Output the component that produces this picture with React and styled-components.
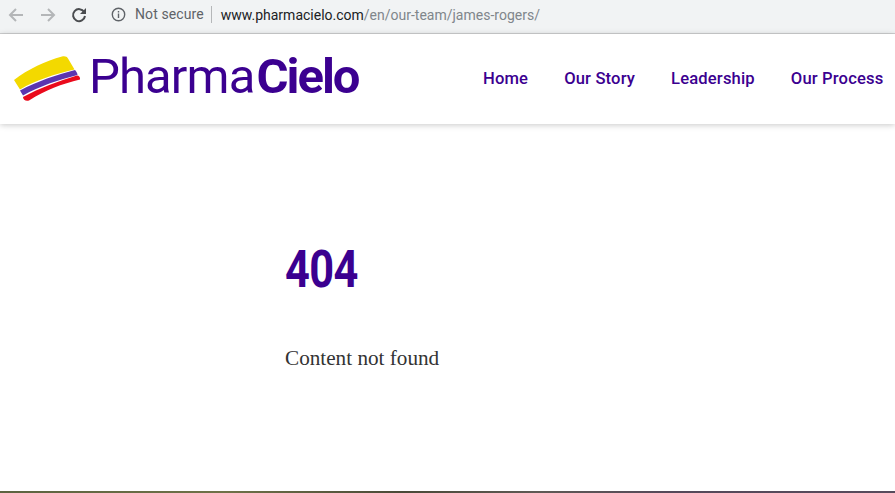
import React from "react";
import styled, { createGlobalStyle } from "styled-components";

const Global = createGlobalStyle`
  html, body { margin: 0; padding: 0; background: #fff; overflow: hidden; }
  #root { width: 895px; height: 493px; }
`;
const Page = styled.div`
  width: 895px; height: 493px; display: flex; flex-direction: column; overflow: hidden;
`;
const Chrome = styled.div`
  height: 33px; flex: none; background: #f1f3f4; border-bottom: 1px solid #cfd0d1; box-sizing: content-box;
  display: flex; align-items: center; padding-left: 6px; padding-bottom: 0;
  font-family: "Roboto", "Liberation Sans", sans-serif; font-size: 14px;
`;
const NavBtn = styled.button`
  width: 20px; height: 20px; padding: 0; border: 0; background: none; margin: -4px ${p => p.$gap}px 0 0;
  display: flex; align-items: center; justify-content: center; color: ${p => p.$color};
`;
const Omnibox = styled.div`
  display: flex; align-items: center; flex: 1; height: 28px; background: #f1f3f4; margin: -4px 0 0 22px;
`;
const InfoIcon = styled.span`
  display: flex; margin-right: 9px; color: #5f6368;
`;
const Secure = styled.span`
  color: #5f6368; padding-right: 7px; border-right: 1px solid #b5b7b9; line-height: 17px; letter-spacing: 0.1px;
`;
const Url = styled.span`
  margin-left: 9px; color: #80868b; letter-spacing: 0;
  b { font-weight: 400; color: #202124; }
`;
const Header = styled.header`
  height: 90px; flex: none; background: #fff; display: flex; align-items: center; position: relative;
  box-shadow: 0 1px 6px rgba(0,0,0,.22); z-index: 1; padding-left: 13px; white-space: nowrap;
`;
const Brand = styled.div`
  display: flex; align-items: center; width: 470px; flex: none; gap: 5px;
`;
const Wordmark = styled.div`
  font-family: "Roboto", sans-serif; font-size: 49px; letter-spacing: -0.9px; color: #3b0090; font-weight: 400;
  line-height: 90px; margin-top: -5px;
  b { font-weight: 700; letter-spacing: -2px; margin-left: 2px; }
`;
const Nav = styled.nav`
  display: flex; gap: 36px; margin-top: -1px;
`;
const NavLink = styled.a`
  font-family: "Roboto", sans-serif; font-weight: 500; font-size: 16.6px; color: #3b0090; letter-spacing: 0.15px;
`;
const Main = styled.main`
  flex: 1; padding: 116px 0 0 285px; background: #fff;
`;
const Title = styled.h1`
  margin: 0; font-family: "Roboto", sans-serif; font-weight: 700; font-size: 51px; line-height: 60px; color: #3b0090;
  transform: scaleX(.85); transform-origin: left center; letter-spacing: -0.8px;
`;
const Message = styled.p`
  margin: 43px 0 0; font-family: "Liberation Serif", serif; font-size: 21.2px; line-height: 30px; color: #333;
`;
const FooterEdge = styled.div`
  height: 2px; flex: none;
  background: linear-gradient(90deg, #5c6340 0%, #6f7248 25%, #4a4a38 45%, #5f5a55 60%, #55495a 75%, #574b5c 100%);
`;

const Back = () => (
  <svg width="16" height="16" viewBox="0 0 16 16" fill="none" stroke="currentColor" strokeWidth="2">
    <path d="M15 8H2M8 2 2 8l6 6" />
  </svg>
);
const Forward = () => (
  <svg width="16" height="16" viewBox="0 0 16 16" fill="none" stroke="currentColor" strokeWidth="2">
    <path d="M1 8h13M8 2l6 6-6 6" />
  </svg>
);
const Reload = () => (
  <svg width="16" height="16" viewBox="0 0 16 16" fill="none">
    <path d="M13.2 5A6 6 0 1 0 14 9" stroke="currentColor" strokeWidth="2" />
    <path d="M15 1v6H9z" fill="currentColor" />
  </svg>
);
const Info = () => (
  <svg width="15" height="15" viewBox="0 0 15 15" fill="none">
    <circle cx="7.5" cy="7.5" r="6.2" stroke="currentColor" strokeWidth="1.4" />
    <path d="M6.8 6.6h1.4v4.4H6.8zM6.8 3.9h1.4v1.5H6.8z" fill="currentColor" />
  </svg>
);
const Logo = () => (
  <svg width="71" height="48" viewBox="13 56 71 48">
    <path d="M14 81C28 70 46 62 62 57.500c3-.5 5 0 6 2l6.500 11C55 75 36 81 20 90.500z" fill="#f3d900" />
    <path d="M20 91.500C38 82 56 76 75 71c1 1 2.500 3 2.500 5C58 81 40 87 23 96.500z" fill="#5b35b0" />
    <path d="M23 98C40 89 58 82 77 76.500c2 0 3.500 2 3 4C62 85 45 91 29 101.500c-3 1-6-.5-6-3.500z" fill="#ea0a1c" />
  </svg>
);

export default function App() {
  return (
    <Page>
      <Global />
      <Chrome>
        <NavBtn $gap={12} $color="#b4b6b8"><Back /></NavBtn>
        <NavBtn $gap={11} $color="#b4b6b8"><Forward /></NavBtn>
        <NavBtn $gap={0} $color="#4a4c4f"><Reload /></NavBtn>
        <Omnibox>
          <InfoIcon><Info /></InfoIcon>
          <Secure>Not secure</Secure>
          <Url><b>www.pharmacielo.com</b>/en/our-team/james-rogers/</Url>
        </Omnibox>
      </Chrome>
      <Header>
        <Brand>
          <Logo />
          <Wordmark>Pharma<b>Cielo</b></Wordmark>
        </Brand>
        <Nav>
          <NavLink>Home</NavLink>
          <NavLink>Our Story</NavLink>
          <NavLink>Leadership</NavLink>
          <NavLink>Our Process</NavLink>
        </Nav>
      </Header>
      <Main>
        <Title>404</Title>
        <Message>Content not found</Message>
      </Main>
      <FooterEdge />
    </Page>
  );
}
